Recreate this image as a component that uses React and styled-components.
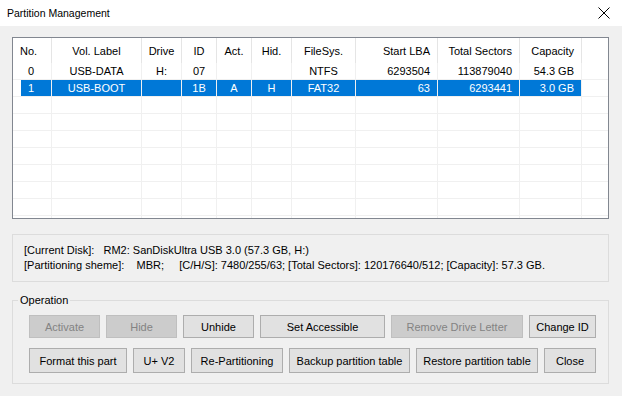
import styled, { createGlobalStyle } from 'styled-components';

const GlobalStyle = createGlobalStyle`
  html, body {
    margin: 0;
    padding: 0;
    background: #f0f0f0;
  }
  body {
    font-family: "Liberation Sans", Arial, sans-serif;
    font-size: 11px;
    color: #000;
  }
`;

const columns = [
  { label: 'No.', width: 39, align: 'left' },
  { label: 'Vol. Label', width: 90, align: 'center' },
  { label: 'Drive', width: 40, align: 'center' },
  { label: 'ID', width: 35, align: 'center' },
  { label: 'Act.', width: 35, align: 'center' },
  { label: 'Hid.', width: 40, align: 'center' },
  { label: 'FileSys.', width: 64, align: 'center' },
  { label: 'Start LBA', width: 82, align: 'right' },
  { label: 'Total Sectors', width: 82, align: 'right' },
  { label: 'Capacity', width: 62, align: 'right' },
];

const partitions = [
  ['0', 'USB-DATA', 'H:', '07', '', '', 'NTFS', '6293504', '113879040', '54.3 GB'],
  ['1', 'USB-BOOT', '', '1B', 'A', 'H', 'FAT32', '63', '6293441', '3.0 GB'],
];

const buttonRows = [
  [
    { label: 'Activate', width: 71, disabled: true },
    { label: 'Hide', width: 71, disabled: true },
    { label: 'Unhide', width: 71 },
    { label: 'Set Accessible', width: 125 },
    { label: 'Remove Drive Letter', width: 132, disabled: true },
    { label: 'Change ID', width: 67 },
  ],
  [
    { label: 'Format this part', width: 98 },
    { label: 'U+ V2', width: 52 },
    { label: 'Re-Partitioning', width: 92 },
    { label: 'Backup partition table', width: 121 },
    { label: 'Restore partition table', width: 122 },
    { label: 'Close', width: 52 },
  ],
];

function App() {
  const rows = [...partitions, ...Array(8).fill(null)];
  return (
    <>
      <GlobalStyle />
      <Window>
        <TitleBar>
          <Title>Partition Management</Title>
          <CloseIcon width="12" height="12" viewBox="0 0 12 12">
            <path d="M0.5 0.5 L11.5 11.5 M11.5 0.5 L0.5 11.5" stroke="#000" strokeWidth="1" fill="none" />
          </CloseIcon>
        </TitleBar>

        <Body>
          <ListView>
            <HeaderRow>
              {columns.map((c, i) => (
                <HeaderCell key={c.label} $w={c.width} $align={c.align} $first={i === 0}>
                  {c.label}
                </HeaderCell>
              ))}
              <Filler />
            </HeaderRow>
            {rows.map((r, ri) => (
              <Row key={ri}>
                {columns.map((c, ci) => (
                  <Cell
                    key={ci}
                    $w={c.width}
                    $align={c.align}
                    $first={ci === 0}
                    $selected={ri === 1}
                  >
                    {r ? r[ci] : ''}
                  </Cell>
                ))}
                <Filler />
              </Row>
            ))}
          </ListView>

          <InfoBox>
            <InfoLine>{'[Current Disk]:   RM2: SanDiskUltra USB 3.0 (57.3 GB, H:)'}</InfoLine>
            <InfoLine>
              {'[Partitioning sheme]:    MBR;     [C/H/S]: 7480/255/63; [Total Sectors]: 120176640/512; [Capacity]: 57.3 GB.'}
            </InfoLine>
          </InfoBox>

          <Group>
            <Legend>Operation</Legend>
            <ButtonGrid>
              {buttonRows.map((row, i) => (
                <ButtonRow key={i} $tall={i === 1}>
                  {row.map((b) => (
                    <Button key={b.label} $w={b.width} disabled={b.disabled}>
                      {b.label}
                    </Button>
                  ))}
                </ButtonRow>
              ))}
            </ButtonGrid>
          </Group>
        </Body>
      </Window>
    </>
  );
}

const Window = styled.div`
  width: 622px;
  height: 396px;
  background: #f0f0f0;
  overflow: hidden;
`;

const TitleBar = styled.div`
  height: 26px;
  background: #fff;
  display: flex;
  align-items: center;
  justify-content: space-between;
  padding: 0 12px 0 7px;
  box-sizing: border-box;
`;

const Title = styled.span`
  font-size: 10.5px;
  font-family: "Liberation Sans", Arial, sans-serif;
  color: #000;
`;

const CloseIcon = styled.svg`
  display: block;
`;

const Body = styled.div`
  padding: 11px 13px 0 12px;
`;

const ListView = styled.div`
  height: 182px;
  box-sizing: border-box;
  border: 1px solid #828790;
  background: #fff;
  overflow: hidden;
`;

const HeaderRow = styled.div`
  display: flex;
  height: 25px;
`;

const HeaderCell = styled.div`
  width: ${(p) => p.$w}px;
  flex: none;
  box-sizing: border-box;
  border-right: 1px solid #e5e5e5;
  display: flex;
  align-items: center;
  justify-content: ${(p) =>
    p.$align === 'right' ? 'flex-end' : p.$align === 'center' ? 'center' : 'flex-start'};
  padding: ${(p) => (p.$first ? '0 0 0 7px' : '0 7px')};
  white-space: nowrap;
`;

const Row = styled.div`
  display: flex;
  height: 17px;
  box-sizing: border-box;
  border-bottom: 1px solid #f0f0f0;
`;

const Cell = styled.div`
  width: ${(p) => (p.$first ? p.$w - 8 : p.$w)}px;
  margin-left: ${(p) => (p.$first ? 8 : 0)}px;
  flex: none;
  box-sizing: border-box;
  border-right: 1px solid #f0f0f0;
  background: ${(p) => (p.$selected ? '#0078d7' : 'transparent')};
  color: ${(p) => (p.$selected ? '#fff' : '#000')};
  display: flex;
  align-items: center;
  justify-content: ${(p) =>
    p.$align === 'right' ? 'flex-end' : p.$align === 'center' ? 'center' : 'flex-start'};
  padding: ${(p) => (p.$first ? '0 0 0 7px' : '0 7px')};
  white-space: nowrap;
`;

const Filler = styled.div`
  flex: 1;
`;

const InfoBox = styled.div`
  margin-top: 15px;
  height: 48px;
  box-sizing: border-box;
  border: 1px solid #dcdcdc;
  padding: 9px 0 0 11px;
  display: flex;
  flex-direction: column;
  gap: 2px;
`;

const InfoLine = styled.div`
  white-space: pre;
  line-height: 13px;
`;

const Group = styled.fieldset`
  margin: 12px 0 0;
  padding: 0 0 10px;
  border: 1px solid #dcdcdc;
  min-width: 0;
`;

const Legend = styled.legend`
  margin-left: 5px;
  padding: 0 2px;
  line-height: 13px;
`;

const ButtonGrid = styled.div`
  display: flex;
  flex-direction: column;
  gap: 10px;
  padding: 8px 0 0 16px;
`;

const ButtonRow = styled.div`
  display: flex;
  gap: 6px;
  height: ${(p) => (p.$tall ? 25 : 23)}px;
`;

const Button = styled.button`
  width: ${(p) => p.$w}px;
  height: 100%;
  flex: none;
  box-sizing: border-box;
  margin: 0;
  padding: 0;
  font-family: "Liberation Sans", Arial, sans-serif;
  font-size: 11px;
  color: #000;
  background: #e1e1e1;
  border: 1px solid #adadad;
  border-radius: 0;
  white-space: nowrap;

  &:disabled {
    background: #cccccc;
    border-color: #bfbfbf;
    color: #838383;
  }
`;

export default App;
